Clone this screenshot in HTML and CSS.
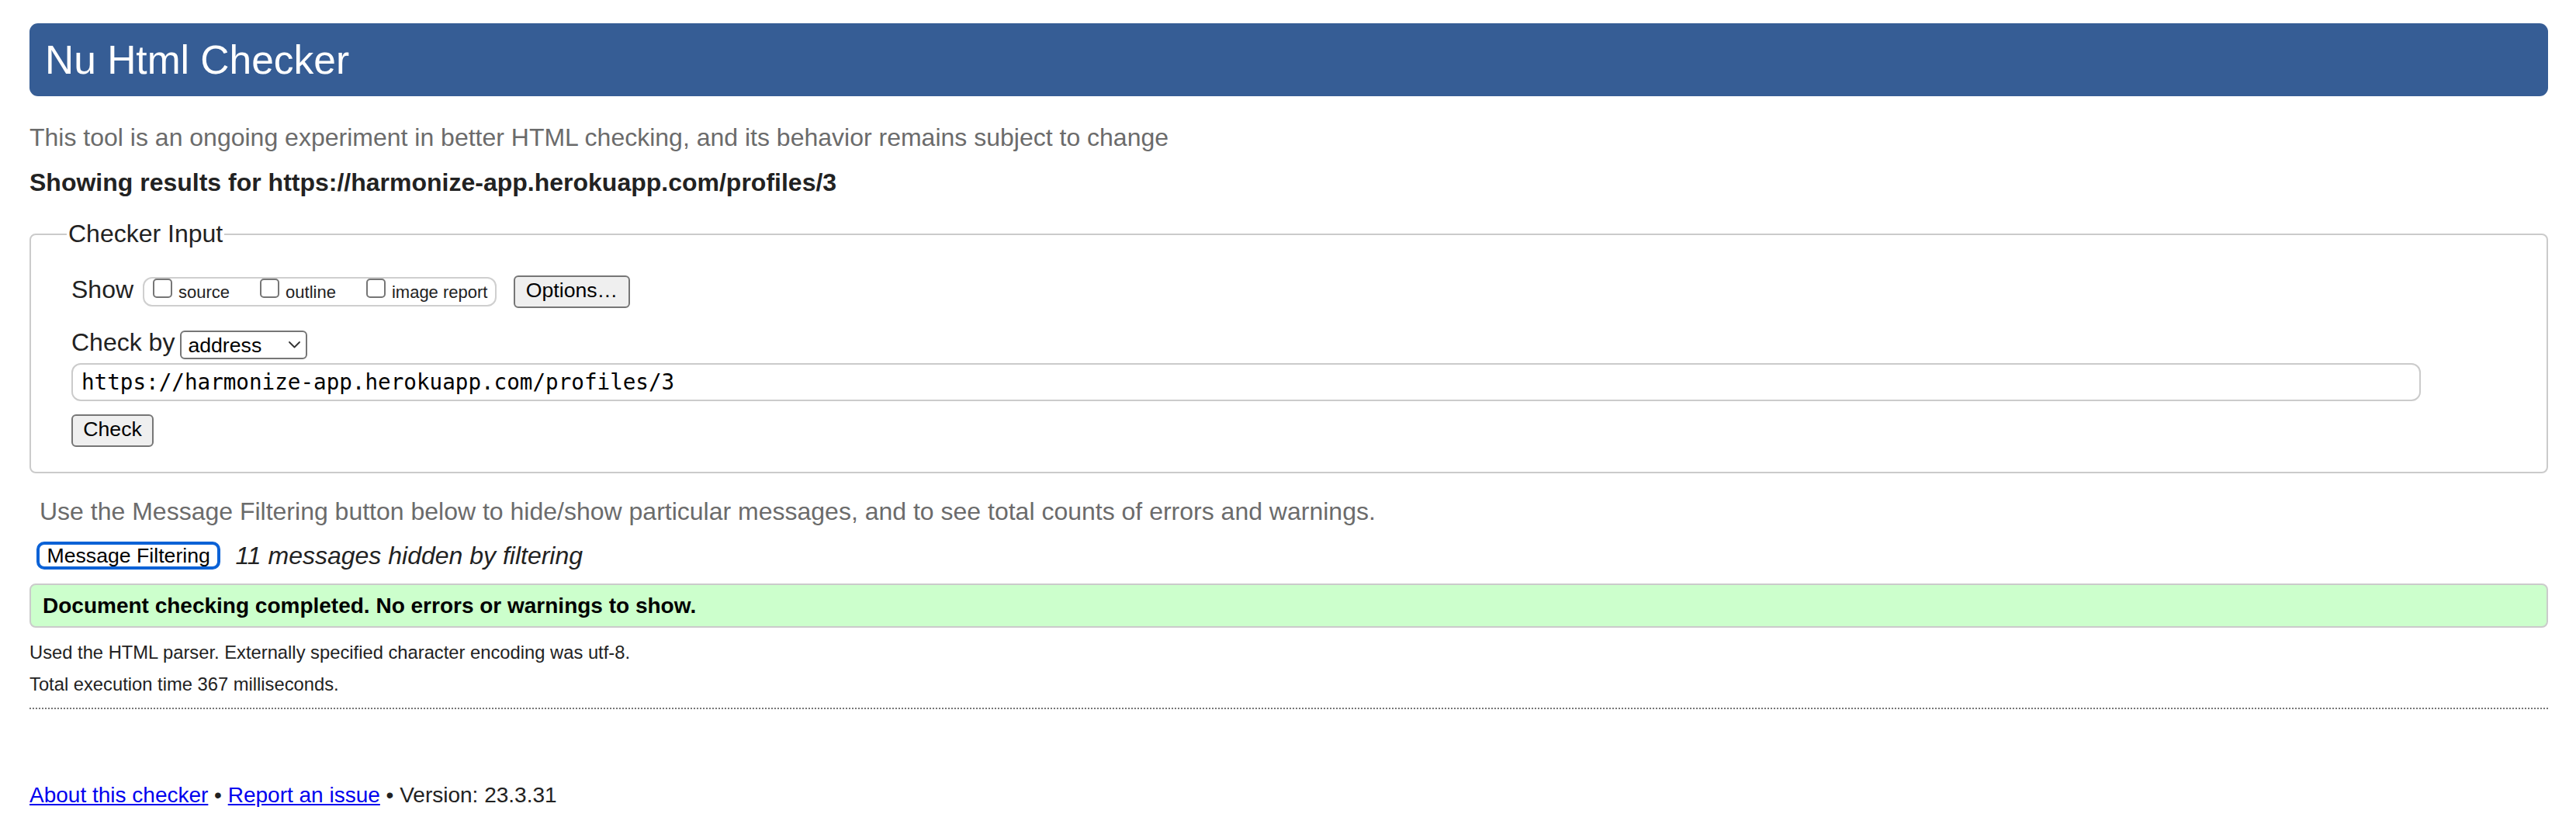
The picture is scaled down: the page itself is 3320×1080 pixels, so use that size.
FILE: index.html
```html
<!DOCTYPE html>
<html lang="en">
<head>
<meta charset="utf-8">
<title>Nu Html Checker</title>
<link rel="stylesheet" href="styles.css">
</head>
<body>
<h1 class="title">Nu Html Checker</h1>
<p class="intro">This tool is an ongoing experiment in better HTML checking, and its behavior remains subject to change</p>
<p class="results-for">Showing results for https://harmonize-app.herokuapp.com/profiles/3</p>
<form class="checker-form">
  <fieldset class="checker">
    <legend class="checker-legend">Checker Input</legend>
    <div class="row show-row">
      <span class="row-label show-label">Show</span>
      <span class="show-group">
        <label class="opt"><input type="checkbox" class="cb"><span class="opt-text">source</span></label>
        <label class="opt"><input type="checkbox" class="cb"><span class="opt-text">outline</span></label>
        <label class="opt"><input type="checkbox" class="cb"><span class="opt-text">image report</span></label>
      </span>
      <button type="button" class="btn options-btn">Options…</button>
    </div>
    <div class="row by-row">
      <span class="row-label by-label">Check by</span>
      <span class="select">
        <span class="select-text">address</span>
        <svg class="chevron" width="15" height="9" viewBox="0 0 15 9"><polyline points="1,1 7.5,7.5 14,1" fill="none" stroke="#333" stroke-width="1.8" stroke-linecap="round" stroke-linejoin="round"/></svg>
      </span>
    </div>
    <input class="url" type="url" value="https://harmonize-app.herokuapp.com/profiles/3">
    <div class="submit-row"><button type="button" class="btn check-btn">Check</button></div>
  </fieldset>
</form>
<p class="filter-note">Use the Message Filtering button below to hide/show particular messages, and to see total counts of errors and warnings.</p>
<div class="filter-row">
  <button type="button" class="filter-btn">Message Filtering</button>
  <span class="filter-count">11 messages hidden by filtering</span>
</div>
<div class="success">Document checking completed. No errors or warnings to show.</div>
<p class="detail detail-first">Used the HTML parser. Externally specified character encoding was utf-8.</p>
<p class="detail">Total execution time 367 milliseconds.</p>
<hr class="sep">
<p class="footer"><a href="#">About this checker</a> • <a href="#">Report an issue</a> • Version: 23.3.31</p>
</body>
</html>
```

FILE: styles.css
```css
* {
  box-sizing: border-box;
}

html {
  background: #fff;
}

body {
  margin: 0;
  padding: 30px 36px 0 38px;
  font-family: "Liberation Sans", Arial, Helvetica, sans-serif;
  font-size: 32px;
  line-height: 37px;
  color: #222;
}

.title {
  margin: 0;
  height: 94px;
  padding: 18px 20px;
  font-size: 51.5px;
  line-height: 58px;
  font-weight: normal;
  color: #fff;
  background: #365d95;
  border-radius: 11px;
}

.intro {
  margin: 35px 0 0;
  color: #6b6b6b;
}

.results-for {
  margin: 21px 0 0;
  font-weight: bold;
  color: #222;
}

.checker-form {
  margin: 29px 0 0;
}

.checker {
  margin: 0;
  min-inline-size: 0;
  padding: 35px 52px 32px;
  border: 2px solid #cbcbcb;
  border-radius: 8px;
}

.checker-legend {
  margin-left: -6px;
  padding: 0 2px;
  font-size: 32px;
  line-height: 37px;
  color: #222;
}

.row {
  display: flex;
  align-items: flex-start;
}

.row-label {
  line-height: 37px;
  color: #222;
}

.show-label {
  margin-right: 12px;
}

.show-group {
  display: flex;
  align-items: flex-start;
  height: 38px;
  margin-top: 2px;
  padding: 0 10px 0 11px;
  border: 2px solid #cfcfcf;
  border-radius: 12px;
}

.opt {
  display: flex;
  align-items: flex-start;
}

.opt + .opt {
  margin-left: 39px;
}

.cb {
  appearance: none;
  -webkit-appearance: none;
  display: block;
  width: 25px;
  height: 25px;
  margin: 0;
  border: 2px solid #767676;
  border-radius: 5px;
  background: #fff;
}

.opt-text {
  margin-left: 8px;
  font-size: 22px;
  line-height: 36px;
  color: #222;
}

.btn {
  height: 42px;
  margin: 0;
  padding: 0 13.3px 4px;
  font-family: "Liberation Sans", Arial, Helvetica, sans-serif;
  font-size: 26.67px;
  line-height: 34px;
  color: #000;
  background: #efefef;
  border: 2px solid #767676;
  border-radius: 6px;
}

.options-btn {
  margin-left: 22px;
}

.by-row {
  margin-top: 26px;
}

.select {
  display: flex;
  align-items: center;
  width: 164px;
  height: 37px;
  margin: 3px 0 0 7px;
  padding-left: 8px;
  border: 2px solid #767676;
  border-radius: 6px;
  background: #fff;
  font-size: 26.67px;
  line-height: 30px;
  color: #000;
}

.chevron {
  display: block;
  margin-left: auto;
  margin-right: 7px;
}

.url {
  display: block;
  width: 96.5%;
  height: 49px;
  margin: 5px 0 0;
  padding: 0 11px;
  border: 2px solid #cbcbcb;
  border-radius: 12px;
  font-family: "DejaVu Sans Mono", Menlo, monospace;
  font-size: 27.6px;
  color: #000;
  background: #fff;
  outline: none;
}

.submit-row {
  margin-top: 17px;
  display: flex;
}

.filter-note {
  margin: 31px 0 0;
  padding-left: 13px;
  color: #6b6b6b;
}

.filter-row {
  display: flex;
  align-items: center;
  margin-top: 20px;
  padding-left: 9px;
  height: 36px;
}

.filter-btn {
  height: 36px;
  margin: 0;
  padding: 0 9.5px;
  font-family: "Liberation Sans", Arial, Helvetica, sans-serif;
  font-size: 26.67px;
  line-height: 28px;
  color: #000;
  background: #fff;
  border: 4px solid #0b62d6;
  border-radius: 10px;
}

.filter-count {
  margin-left: 19px;
  font-style: italic;
  color: #222;
}

.success {
  height: 57px;
  margin-top: 18px;
  padding: 0 15px;
  border: 2px solid #cbcbcb;
  border-radius: 8px;
  background: #ccffcc;
  font-size: 28px;
  line-height: 53px;
  font-weight: bold;
  color: #000;
}

.detail {
  margin: 14px 0 0;
  font-size: 23.75px;
  line-height: 27px;
  color: #222;
}

.detail-first {
  margin-top: 18px;
}

.sep {
  height: 0;
  margin: 17px 0 0;
  border: 0;
  border-top: 2px dotted #777;
}

.footer {
  margin: 95px 0 0;
  font-size: 28px;
  line-height: 32px;
  color: #222;
}

.footer a {
  color: #0000ee;
  text-decoration: underline;
}
```
